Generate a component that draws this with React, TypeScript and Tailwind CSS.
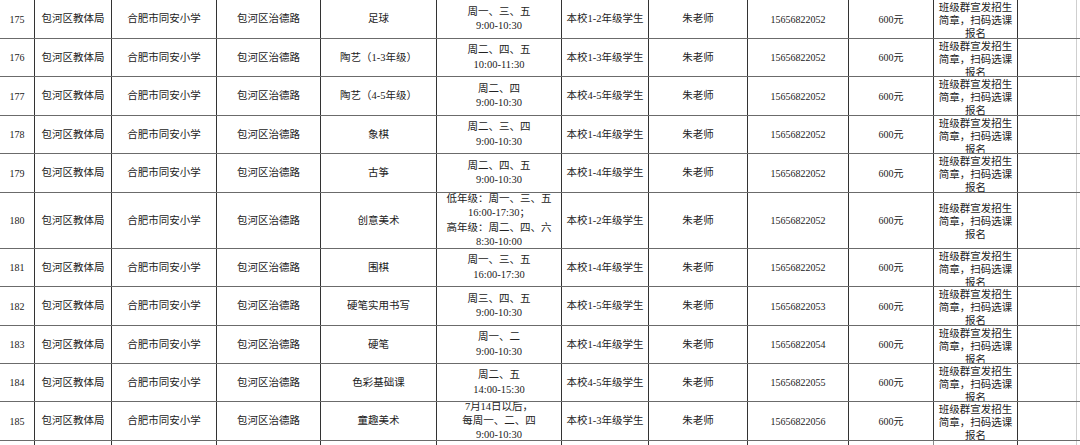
import React from "react";

type Row = {
  no: string;
  course: string;
  time: string[];
  grade: string;
  phone: string;
  h: string;
};

const rows: Row[] = [
  { no: "175", course: "足球", time: ["周一、三、五", "9:00-10:30"], grade: "本校1-2年级学生", phone: "15656822052", h: "h-[39px]" },
  { no: "176", course: "陶艺（1-3年级）", time: ["周二、四、五", "10:00-11:30"], grade: "本校1-3年级学生", phone: "15656822052", h: "h-[38px]" },
  { no: "177", course: "陶艺（4-5年级）", time: ["周二、四", "9:00-10:30"], grade: "本校4-5年级学生", phone: "15656822052", h: "h-[39px]" },
  { no: "178", course: "象棋", time: ["周二、三、四", "9:00-10:30"], grade: "本校1-4年级学生", phone: "15656822052", h: "h-[38px]" },
  { no: "179", course: "古筝", time: ["周二、四、五", "9:00-10:30"], grade: "本校1-4年级学生", phone: "15656822052", h: "h-[39px]" },
  {
    no: "180",
    course: "创意美术",
    time: ["低年级：周一、三、五", "16:00-17:30；", "高年级：周二、四、六", "8:30-10:00"],
    grade: "本校1-2年级学生",
    phone: "15656822052",
    h: "h-[56px]",
  },
  { no: "181", course: "围棋", time: ["周一、三、五", "16:00-17:30"], grade: "本校1-4年级学生", phone: "15656822052", h: "h-[38px]" },
  { no: "182", course: "硬笔实用书写", time: ["周三、四、五", "9:00-10:30"], grade: "本校1-5年级学生", phone: "15656822053", h: "h-[39px]" },
  { no: "183", course: "硬笔", time: ["周一、二", "9:00-10:30"], grade: "本校1-4年级学生", phone: "15656822054", h: "h-[38px]" },
  { no: "184", course: "色彩基础课", time: ["周二、五", "14:00-15:30"], grade: "本校4-5年级学生", phone: "15656822055", h: "h-[38px]" },
  {
    no: "185",
    course: "童趣美术",
    time: ["7月14日以后，", "每周一、二、四", "9:00-10:30"],
    grade: "本校1-3年级学生",
    phone: "15656822056",
    h: "h-[39px]",
  },
];

const cols =
  "grid grid-cols-[35px_77px_105px_104px_116px_125px_87px_99px_101px_85px_84px_59px_1fr]";

const cell = "flex items-center justify-center text-center border-r border-[#333] overflow-hidden";

function TableRow({ r }: { r: Row }) {
  return (
    <div className={`${cols} ${r.h} border-b border-[#6b6b6b]`}>
      <div className={`${cell} text-[10px]`}>{r.no}</div>
      <div className={cell}>包河区教体局</div>
      <div className={cell}>合肥市同安小学</div>
      <div className={cell}>包河区治德路</div>
      <div className={cell}>{r.course}</div>
      <div className={`${cell} flex-col leading-[14.3px]`}>
        {r.time.map((t) => (
          <span key={t} className="whitespace-nowrap">
            {t}
          </span>
        ))}
      </div>
      <div className={cell}>{r.grade}</div>
      <div className={cell}>朱老师</div>
      <div className={`${cell} text-[10px]`}>{r.phone}</div>
      <div className={`${cell} text-[10px] border-[#8a8a8a]`}>600元</div>
      <div className="flex flex-col items-center [justify-content:safe_center] pt-[1px] text-center leading-[13px] border-r border-[#333] overflow-hidden">
        <span className="whitespace-nowrap">班级群宣发招生</span>
        <span className="whitespace-nowrap">简章，扫码选课</span>
        <span className="whitespace-nowrap">报名</span>
      </div>
      <div className="border-r border-[#cfcfcf]"></div>
      <div></div>
    </div>
  );
}

export default function App() {
  return (
    <div
      className="w-[1080px] h-[445px] overflow-hidden bg-white text-[#222] text-[10.5px]"
      style={{ fontFamily: '"Liberation Serif", "Noto Sans CJK SC", serif' }}
    >
      {rows.map((r) => (
        <TableRow key={r.no} r={r} />
      ))}
      <div className={`${cols} h-[20px]`}>
        {Array.from({ length: 12 }).map((_, i) => (
          <div
            key={i}
            className={`border-r ${i === 9 ? "border-[#8a8a8a]" : i === 11 ? "border-[#cfcfcf]" : "border-[#333]"}`}
          ></div>
        ))}
      </div>
    </div>
  );
}
